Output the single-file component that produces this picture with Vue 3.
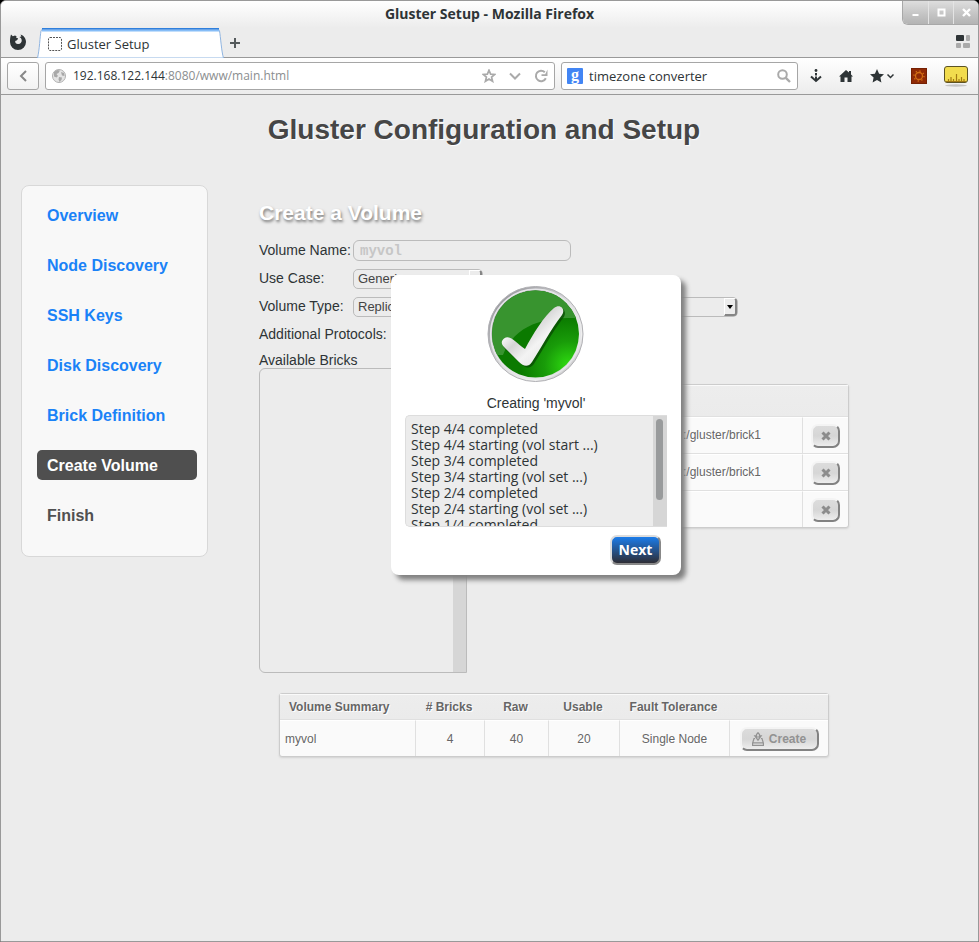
<script setup>
import { ref } from 'vue'

const steps = [
  { label: 'Overview', state: 'done' },
  { label: 'Node Discovery', state: 'done' },
  { label: 'SSH Keys', state: 'done' },
  { label: 'Disk Discovery', state: 'done' },
  { label: 'Brick Definition', state: 'done' },
  { label: 'Create Volume', state: 'active' },
  { label: 'Finish', state: 'pending' }
]

const volumeName = ref('myvol')
const query = ref('timezone converter')
const bricks = [':/gluster/brick1', ':/gluster/brick1', '']

const log = [
  'Step 4/4 completed',
  'Step 4/4 starting (vol start ...)',
  'Step 3/4 completed',
  'Step 3/4 starting (vol set ...)',
  'Step 2/4 completed',
  'Step 2/4 starting (vol set ...)',
  'Step 1/4 completed'
]
</script>

<template>
  <div class="desktop">
    <div class="window">
      <header class="titlebar">
        <span class="window-title">Gluster Setup - Mozilla Firefox</span>
        <div class="window-controls">
          <button type="button" aria-label="Minimize">
            <svg width="9" height="9" viewBox="0 0 9 9"><path d="M1.500 7H7.500" stroke="#fff" stroke-width="2" /></svg>
          </button>
          <button type="button" aria-label="Maximize">
            <svg width="9" height="9" viewBox="0 0 9 9"><rect x="1.500" y="1.500" width="6" height="6" fill="none" stroke="#fff" stroke-width="2" /></svg>
          </button>
          <button type="button" aria-label="Close">
            <svg width="9" height="9" viewBox="0 0 9 9"><path d="M1 1L8 8M8 1L1 8" stroke="#fff" stroke-width="2.400" /></svg>
          </button>
        </div>
      </header>

      <div class="tabstrip">
        <svg class="fox" width="18" height="18" viewBox="0 0 18 18">
          <path d="M2 1.500L3.800 3.200 6 2.600 7.600 3.200 7 4.600 9.200 5.600 8 7.200 6.200 8C6 10 7.400 11.200 9.300 11 11.600 11 13 9.300 12.700 7 12.500 5.300 11.400 4.300 10.400 3.900L12.400 3.600 11.500 1.600C14.700 2.600 17 5.500 17 9A8 8 0 0 1 1 9C1 6 1.200 3.600 2 1.500Z" fill="#2e3436" />
        </svg>
        <div class="tab">
          <svg class="tab-shape" viewBox="0 0 187 30" preserveAspectRatio="none">
            <path d="M0.500 30C2.500 22 3 8 4 3Q4.500 1 6.500 1H180Q182 1 182.500 3C183.500 8 184.500 24 186.500 30Z" fill="#fff" stroke="#8fb4e0" />
            <path d="M5 2.500H182" stroke="#86bdf7" stroke-width="2" />
            <path d="M5 0.800H182" stroke="#2f7fdc" stroke-width="1.600" />
          </svg>
          <svg class="tab-icon" width="14" height="14" viewBox="0 0 14 14"><rect x="0.500" y="0.500" width="13" height="13" rx="1.500" fill="none" stroke="#555" stroke-dasharray="2 1" /></svg>
          <span class="tab-label">Gluster Setup</span>
        </div>
        <button class="plain new-tab" type="button" aria-label="New tab">
          <svg width="10" height="10" viewBox="0 0 10 10"><path d="M5 0V10M0 5H10" stroke="#555a5c" stroke-width="2" /></svg>
        </button>
        <button class="plain groups" type="button" aria-label="Tab groups">
          <svg width="14" height="13" viewBox="0 0 14 13">
            <rect width="8" height="6" rx="1" fill="#2e3436" /><rect x="10" width="4" height="6" rx="1" fill="#aaa" />
            <rect y="8" width="5" height="5" rx="1" fill="#aaa" /><rect x="7" y="8" width="7" height="5" rx="1" fill="#aaa" />
          </svg>
        </button>
      </div>

      <nav class="navbar">
        <button class="back" type="button" aria-label="Back">
          <svg width="8" height="12" viewBox="0 0 8 12"><path d="M7 1L2 6L7 11" fill="none" stroke="#888" stroke-width="2" /></svg>
        </button>
        <div class="field location">
          <svg width="14" height="14" viewBox="0 0 14 14">
            <circle cx="7" cy="7" r="6.500" fill="#e4e4e4" stroke="#b0b0b0" />
            <path d="M2 3L5 1 8 1.500 6.500 4 4.500 5 6 7 4.500 8.500 2 7.500ZM7 8L10 8.500 9.500 11 7.500 13 6.500 10.500ZM9 3L12 4 12.500 7 10 6.500Z" fill="#a8a8a8" />
          </svg>
          <span class="url"><b>192.168.122.144</b>:8080/www/main.html</span>
          <svg width="14" height="14" viewBox="0 0 14 14"><path d="M7 1.200L8.600 5.100 12.800 5.400 9.600 8.100 10.600 12.300 7 10 3.400 12.300 4.400 8.100 1.200 5.400 5.400 5.100Z" fill="none" stroke="#aaa" stroke-width="1.700" /></svg>
          <svg width="12" height="14" viewBox="0 0 12 14"><path d="M1 4.500L6 9.500L11 4.500" fill="none" stroke="#aaa" stroke-width="2" /></svg>
          <svg width="14" height="14" viewBox="0 0 14 14"><path d="M10.800 3.300A5.200 5.200 0 1 0 11.800 9.200" fill="none" stroke="#aaa" stroke-width="2" /><path d="M13.500 0.500V7H7.500V5.200H11.200Z" fill="#aaa" /></svg>
        </div>
        <div class="field search">
          <svg width="16" height="16" viewBox="0 0 16 16">
            <rect width="16" height="16" rx="1" fill="#4285f4" />
            <text x="8" y="11.500" text-anchor="middle" font-family="Liberation Serif" font-size="16" font-weight="bold" fill="#fff">g</text>
          </svg>
          <input v-model="query" type="text" aria-label="Search">
          <svg width="14" height="14" viewBox="0 0 14 14"><circle cx="5.500" cy="5.500" r="4.300" fill="none" stroke="#aaa" stroke-width="2" /><path d="M8.800 8.800L13 13" stroke="#aaa" stroke-width="2.400" /></svg>
        </div>
        <div class="tools">
          <button class="plain" type="button" aria-label="Downloads">
            <svg width="12" height="14" viewBox="0 0 12 14"><circle cx="6" cy="1.500" r="1.400" fill="#2e3436" /><path d="M6 4V6.500M6 7.500V11M1 7.500L6 12L11 7.500" fill="none" stroke="#2e3436" stroke-width="2" /></svg>
          </button>
          <button class="plain" type="button" aria-label="Home">
            <svg width="14" height="12" viewBox="0 0 14 12"><path d="M7 0L10 2.500V1H12V4.500L14 6.500H12.500V12H8.500V7.500H5.500V12H1.500V6.500H0Z" fill="#2e3436" /></svg>
          </button>
          <button class="plain" type="button" aria-label="Bookmarks">
            <svg width="24" height="14" viewBox="0 0 24 14"><path d="M7 0L9.100 4.700 14 5.200 10.400 8.600 11.400 13.600 7 11 2.600 13.600 3.600 8.600 0 5.200 4.900 4.700Z" fill="#2e3436" /><path d="M17.500 5.500L20.500 8.500L23.500 5.500" fill="none" stroke="#2e3436" stroke-width="1.500" /></svg>
          </button>
          <button class="plain" type="button" aria-label="Gear add-on">
            <svg width="16" height="16" viewBox="0 0 16 16"><rect x="0.500" y="0.500" width="15" height="15" fill="#8f2a06" stroke="#762103" /><circle cx="8" cy="8" r="3.500" fill="none" stroke="#d26e14" stroke-width="1.300" /><circle cx="8" cy="8" r="5" fill="none" stroke="#d26e14" stroke-width="1.400" stroke-dasharray="1.300 2.600" /></svg>
          </button>
          <button class="plain" type="button" aria-label="Ruler add-on">
            <svg width="24" height="21" viewBox="0 0 24 21"><ellipse cx="12" cy="19.500" rx="11" ry="1.200" fill="#c4c4c4" /><rect x="0.500" y="0.500" width="23" height="16" rx="2.500" fill="#f2dc4e" stroke="#5b5324" /><path d="M2 15.500H22M4.500 15V13M7 15V11M9.500 15V13M12.500 15V8M15 15V13M17.500 15V11M20 15V13" stroke="#a37a12" stroke-width="1.200" /></svg>
          </button>
        </div>
      </nav>

      <main class="page">
        <h1>Gluster Configuration and Setup</h1>
        <div class="columns">
          <ol class="sidebar">
            <li v-for="step in steps" :key="step.label">
              <a href="#" class="step" :class="step.state">{{ step.label }}</a>
            </li>
          </ol>

          <section class="content">
            <h2>Create a Volume</h2>
            <div class="row">
              <label for="vol-name">Volume Name:</label>
              <input id="vol-name" v-model="volumeName" class="name" type="text">
            </div>
            <div class="row">
              <label for="use-case">Use Case:</label>
              <div class="select use-case">
                <select id="use-case"><option>Generic</option></select>
                <span class="drop"><svg width="6" height="4" viewBox="0 0 6 4"><path d="M0 0H6L3 4Z" /></svg></span>
              </div>
            </div>
            <div class="row">
              <label for="vol-type">Volume Type:</label>
              <div class="select vol-type">
                <select id="vol-type"><option>Replicated</option></select>
                <span class="drop"><svg width="6" height="4" viewBox="0 0 6 4"><path d="M0 0H6L3 4Z" /></svg></span>
              </div>
            </div>
            <div class="row"><span>Additional Protocols:</span></div>
            <div id="available" class="available">Available Bricks</div>

            <div class="bricks">
              <div class="brick-list" role="listbox" aria-labelledby="available"><span class="track"></span></div>
              <table class="grid selected">
                <colgroup><col><col class="c-remove"></colgroup>
                <thead><tr><th></th><th></th></tr></thead>
                <tbody>
                  <tr v-for="(brick, i) in bricks" :key="i">
                    <td class="path">{{ brick }}</td>
                    <td>
                      <button class="soft remove" type="button" aria-label="Remove brick">
                        <svg width="10" height="10" viewBox="0 0 10 10"><path d="M1.500 1.500L8.500 8.500M8.500 1.500L1.500 8.500" stroke="#8c8c8c" stroke-width="3" /></svg>
                      </button>
                    </td>
                  </tr>
                </tbody>
              </table>
            </div>

            <table class="grid summary">
              <colgroup><col class="c-name"><col class="c-bricks"><col class="c-raw"><col class="c-usable"><col class="c-fault"><col></colgroup>
              <thead>
                <tr><th class="first">Volume Summary</th><th># Bricks</th><th>Raw</th><th>Usable</th><th>Fault Tolerance</th><th></th></tr>
              </thead>
              <tbody>
                <tr>
                  <td class="first">myvol</td><td>4</td><td>40</td><td>20</td><td>Single Node</td>
                  <td>
                    <button class="soft create" type="button">
                      <svg width="12" height="14" viewBox="0 0 12 14"><path d="M3 6.500H2L0.600 11V13.400H11.400V11L10 6.500H9M0.600 10.800H11.400M4.500 3.500V2.500L6 0.700L7.500 2.500V3.500M2.800 3.800H4.500V5H7.500V3.800H9.200L6 8.200Z" fill="none" stroke="#929292" stroke-width="1.200" /></svg>
                      Create
                    </button>
                  </td>
                </tr>
              </tbody>
            </table>
          </section>
        </div>

        <div class="modal" role="dialog" aria-labelledby="creating">
          <svg class="tick" width="98" height="98" viewBox="0 0 98 98">
            <defs>
              <linearGradient id="rim" x1="0" y1="0" x2="1" y2="1">
                <stop offset="0" stop-color="#85858a" /><stop offset="0.300" stop-color="#b5b5b9" /><stop offset="0.500" stop-color="#dededf" /><stop offset="0.750" stop-color="#f0f0f0" /><stop offset="1" stop-color="#a0a0a3" />
              </linearGradient>
              <radialGradient id="green" cx="0.880" cy="0.860" r="0.550">
                <stop offset="0" stop-color="#2fdc11" /><stop offset="0.500" stop-color="#199c09" /><stop offset="1" stop-color="#0b7a00" />
              </radialGradient>
              <linearGradient id="mark" x1="0" y1="0" x2="1" y2="1">
                <stop offset="0" stop-color="#fff" /><stop offset="0.250" stop-color="#fff" /><stop offset="0.420" stop-color="#d5d5d5" /><stop offset="0.600" stop-color="#f3f3f3" /><stop offset="1" stop-color="#dcdcdc" />
              </linearGradient>
              <clipPath id="disc"><circle cx="48.500" cy="49" r="43.500" /></clipPath>
            </defs>
            <circle cx="48.500" cy="49" r="47.500" fill="url(#rim)" stroke="#b0b0b4" />
            <circle cx="48.500" cy="49" r="44.800" fill="none" stroke="#e6e6e9" stroke-width="1.500" />
            <circle cx="48.500" cy="49" r="43.500" fill="url(#green)" />
            <path d="M0 0H98V34C80 32 66 33 56 36C38 41 24 50 16 70H0Z" fill="#38942f" clip-path="url(#disc)" />
            <path d="M17.500 54C23 50 28 57 38 64C46 49 57 31 68 23C74 19 79 25 75 31C64 45 54 64 45 78C41 83 36 81 32 77L17 63C14 60 14 56 17.500 54Z" transform="translate(1.500 1.500)" fill="#074c02" opacity="0.800" />
            <path d="M17 53.500C23 49 28 57 38 64C46 49 57 31 67 23C73 18 79 24 75 30C64 44 54 63 45 77C41 83 36 81 32 77L17 62C14 59 14 56 17 53.500Z" fill="url(#mark)" />
          </svg>
          <div id="creating" class="creating">Creating 'myvol'</div>
          <div class="log" role="log">
            <div class="lines"><div v-for="(line, i) in log" :key="i">{{ line }}</div></div>
            <span class="track"><span class="thumb"></span></span>
          </div>
          <button class="next" type="button">Next</button>
        </div>
      </main>
    </div>
  </div>
</template>

<style>
body {
  margin: 0;
  background: #000;
}
</style>

<style scoped>
* {
  box-sizing: border-box;
}
.window {
  min-height: 100vh;
  display: flex;
  flex-direction: column;
  border: 1px solid #999;
  border-radius: 6px 6px 0 0;
  background: #ececec;
  font: 13px/16px "Open Sans", sans-serif;
  color: #2e3436;
  overflow: hidden;
}
button,
input,
select {
  font: inherit;
  color: inherit;
}
svg {
  display: block;
  flex: none;
}
.plain {
  display: flex;
  padding: 0;
  border: 0;
  background: none;
}
.titlebar {
  position: relative;
  height: 27px;
  background: linear-gradient(#fff, #ececec);
  text-align: center;
}
.window-title {
  font-weight: 700;
  font-size: 14px;
  line-height: 26px;
}
.window-controls {
  position: absolute;
  top: 0;
  right: 0;
  display: flex;
  height: 24px;
  border: solid #a8a8a8;
  border-width: 0 0 1px 1px;
  border-radius: 0 0 0 6px;
  overflow: hidden;
}
.window-controls button {
  width: 25px;
  display: grid;
  place-items: center;
  padding: 0;
  border: 0;
  background: linear-gradient(#dedede, #c3c3c3 60%, #b4b4b4);
}
.window-controls button + button {
  border-left: 1px solid #e4e4e4;
}
.tabstrip {
  display: flex;
  align-items: flex-end;
  height: 30px;
  padding: 0 8px;
  border-bottom: 1px solid #999;
}
.fox {
  margin-bottom: 6px;
}
.tab {
  position: relative;
  width: 187px;
  height: 30px;
  margin: 0 6px -1px 10px;
  padding: 2px 0 0 11px;
  display: flex;
  align-items: center;
  gap: 5px;
}
.tab-shape {
  position: absolute;
  inset: 0;
  width: 100%;
  height: 100%;
}
.tab-icon,
.tab-label {
  position: relative;
}
.new-tab {
  margin-bottom: 9px;
}
.groups {
  margin: 0 0 9px auto;
}
.navbar {
  display: flex;
  align-items: center;
  height: 37px;
  padding: 0 10px 0 6px;
  gap: 6px;
  border-bottom: 1px solid #999;
  background: linear-gradient(#fff, #ececec);
}
.back,
.field {
  height: 28px;
  border: 1px solid #a6a6a6;
  border-radius: 3px;
  background: #fff;
}
.back {
  width: 32px;
  display: grid;
  place-items: center;
  background: linear-gradient(#fff, #f2f2f2);
}
.field {
  display: flex;
  align-items: center;
  min-width: 0;
  padding: 0 6px;
}
.location {
  flex: 2 1 510px;
  gap: 13px;
}
.url {
  flex: 1;
  margin-left: -6px;
  font-size: 12px;
  color: #8b8e8f;
}
.url b {
  font-weight: 400;
  color: #2e3436;
}
.search {
  flex: 1 1 237px;
  gap: 6px;
  padding-left: 5px;
}
.search input {
  flex: 1;
  min-width: 0;
  padding: 0;
  border: 0;
  background: none;
  outline: 0;
}
.tools {
  display: flex;
  align-items: center;
  gap: 17px;
  margin-left: 6px;
}
.page {
  position: relative;
  flex: 1;
  font-family: "Liberation Sans", sans-serif;
  font-size: 14px;
}
h1 {
  margin: 19px 11px 39px 0;
  font-size: 28px;
  line-height: 32px;
  text-align: center;
  color: #464646;
  text-shadow: 1px 1px 1px #fff;
}
.columns {
  display: flex;
  align-items: flex-start;
  gap: 51px;
  padding: 0 20px;
}
.sidebar {
  flex: none;
  width: 187px;
  margin: 0;
  padding: 14px 10px 26px 15px;
  display: grid;
  gap: 20px;
  list-style: none;
  border: 1px solid #d8d8d8;
  border-radius: 8px;
  background: #f8f8f8;
}
.step {
  display: block;
  width: 160px;
  padding: 2px 10px 0;
  border-radius: 5px;
  font-size: 16px;
  font-weight: 700;
  line-height: 28px;
  text-decoration: none;
  color: #1a82f7;
}
.step.active {
  background: #4f4f4f;
  color: #fff;
}
.step.pending {
  color: #505050;
}
.content {
  flex: 1;
  min-width: 0;
  max-width: 590px;
}
h2 {
  margin: 16px 0 11px;
  font-size: 21px;
  line-height: 24px;
  color: #fff;
  text-shadow: 1px 2px 3px #777;
}
.row {
  display: flex;
  align-items: center;
  height: 28px;
  white-space: nowrap;
}
.row label {
  width: 94px;
}
.name {
  width: 218px;
  height: 21px;
  padding: 2px 6px 0;
  border: 1px solid #bbb;
  border-radius: 6px;
  background: transparent;
  font: bold 14px "Liberation Mono", monospace;
  color: #c6c6c6;
}
.select {
  position: relative;
  height: 20px;
  margin-top: 2px;
}
.use-case {
  width: 130px;
}
.vol-type {
  width: 385px;
}
.select select {
  appearance: none;
  display: block;
  width: 100%;
  height: 100%;
  padding: 0 4px;
  border: 1px solid #bbb;
  border-radius: 5px;
  background: transparent;
  font-size: 13px;
  color: #444;
}
.drop {
  position: absolute;
  top: 1px;
  right: 1px;
  width: 13px;
  height: 18px;
  display: grid;
  place-items: center;
  border: solid #fff;
  border-width: 1px 2px 2px 1px;
  border-right-color: #858585;
  border-bottom-color: #858585;
  border-radius: 0 3px 3px 0;
  background: #ececec;
  pointer-events: none;
}
.available {
  height: 20px;
  padding-top: 4px;
}
.bricks {
  display: flex;
  align-items: flex-start;
  gap: 22px;
}
.brick-list {
  flex: none;
  display: flex;
  justify-content: flex-end;
  width: 208px;
  height: 305px;
  border: 1px solid #bbb;
  border-radius: 6px 0 0 6px;
}
.track {
  width: 13px;
  background: #d6d6d6;
}
.grid {
  table-layout: fixed;
  border: 1px solid #ccc;
  border-radius: 3px;
  border-spacing: 0;
  background: #fafafa;
  box-shadow: 0 1px 2px #d1d1d1;
  font-size: 12px;
  line-height: 16px;
  color: #666;
  text-shadow: 1px 1px 0 #fff;
}
.grid th {
  padding: 0 3px 0 0;
  height: 26px;
  border-top: 1px solid #fafafa;
  border-bottom: 1px solid #e0e0e0;
  background: linear-gradient(#ededed, #ebebeb);
}
.grid td {
  height: 37px;
  padding: 0;
  border-top: 1px solid #fff;
  border-right: 1px solid #e0e0e0;
  border-bottom: 1px solid #e0e0e0;
  text-align: center;
}
.grid td:last-child {
  border-right: 0;
}
.grid tr:last-child td {
  height: 36px;
  border-bottom: 0;
}
.selected {
  flex: 1;
  width: 0;
  margin-top: 16px;
}
.selected th {
  height: 32px;
}
.c-remove {
  width: 45px;
}
.grid .path {
  padding: 0 41px 2px 0;
  text-align: right;
}
.summary {
  width: calc(100% - 40px);
  margin: 20px 20px 0;
}
.grid .first {
  text-align: left;
}
.summary th.first {
  padding-left: 9px;
}
.summary td.first {
  padding-left: 5px;
}
.c-name {
  width: 136px;
}
.c-bricks {
  width: 69px;
}
.c-raw {
  width: 64px;
}
.c-usable {
  width: 71px;
}
.c-fault {
  width: 110px;
}
.soft {
  display: inline-flex;
  align-items: center;
  justify-content: center;
  gap: 5px;
  height: 24px;
  padding: 0;
  border: 2px solid #f4f4f4;
  border-right-color: #828282;
  border-bottom-color: #828282;
  border-radius: 7px;
  background: linear-gradient(#dcdcdc, #d6d6d6 50%, #ededed);
  vertical-align: middle;
}
.remove {
  width: 29px;
}
.create {
  width: 79px;
  font-weight: 700;
  color: #929292;
}
.modal {
  position: absolute;
  top: 180px;
  left: 390px;
  width: 290px;
  padding: 10px 14px;
  border-radius: 8px;
  background: #fff;
  box-shadow: 5px 5px 5px #808080;
}
.tick {
  margin: 0 auto;
}
.creating {
  padding: 12px 0 4px;
  text-align: center;
}
.log {
  display: flex;
  height: 112px;
  border: 1px solid #ddd;
  border-right: 0;
  border-radius: 5px 0 0 5px;
  background: #ececec;
  overflow: hidden;
  font-family: "Open Sans", sans-serif;
}
.lines {
  flex: 1;
  padding: 5px;
}
.log .track {
  flex: none;
  width: 14px;
  padding: 3px;
}
.thumb {
  display: block;
  width: 7px;
  height: 81px;
  border-radius: 4px;
  background: #999b9c;
}
.next {
  display: block;
  width: 51px;
  height: 30px;
  margin: 8px 6px 0 auto;
  padding: 0;
  border: 2px solid #ddd;
  border-right-color: #888;
  border-bottom-color: #888;
  border-radius: 7px;
  background: linear-gradient(#1a82f7, #2f2727) border-box;
  font: bold 14px/16px "Open Sans", sans-serif;
  color: #fff;
}
</style>
